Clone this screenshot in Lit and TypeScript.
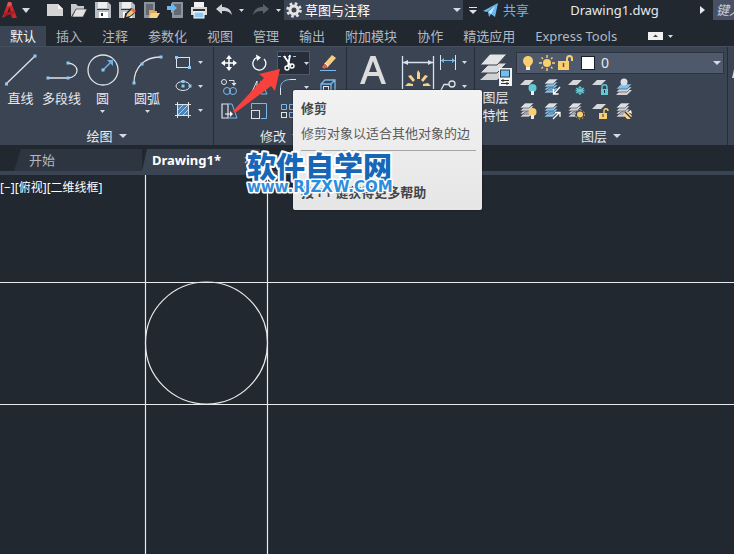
import { LitElement, html, svg, css, nothing } from "lit";
import { customElement, state } from "lit/decorators.js";
import { classMap } from "lit/directives/class-map.js";

const icon = (w: number, h: number, body: unknown) =>
  html`<svg class="icon" width=${w} height=${h} viewBox="0 0 ${w} ${h}" fill="none" aria-hidden="true">${body}</svg>`;

const dot = (x: number, y: number) =>
  svg`<rect x=${x - 1.5} y=${y - 1.5} width="3" height="3" fill="#8cc8f0"/>`;

const W = "#dfe3e8";
const B = "#7ab8ea";
const Y = "#f9cf72";
const T = "#62c8d2";

const caret = (w = 6, h = 3) =>
  html`<svg class="icon" width=${w} height=${h} viewBox="0 0 6 3" preserveAspectRatio="none" aria-hidden="true"><path d="M0 0H6L3 3Z" fill="#d5dbe3"/></svg>`;

/* quick access bar */
const qNew = icon(18, 18, svg`<path d="M1 3H12L17 8V15H1Z" fill="#d4d4d4"/><path d="M12 3V8H17Z" fill="#f2f2f2"/>`);
const qOpen = icon(18, 18, svg`<path d="M1 16V3H6L8 5H14V8H6Z" fill="#c9c9c9"/><path d="M6 8H17L13 16H2Z" fill="#e2e2e2" stroke="#212830" stroke-width=".6"/>`);
const disk = svg`<path d="M1 1H14L17 4V17H1Z" fill="#b9bcc0"/><rect x="4" y="1" width="9" height="6" fill="#eee"/><path d="M3 8.500H15" stroke="#30363e"/><rect x="5" y="11" width="9" height="6" fill="#fff"/><rect x="7" y="12" width="2" height="3" fill="#333"/>`;
const pencil = svg`<path d="M6 18L7 13L13 7L18 11L11 17Z" fill="#212830"/><path d="M8 16L9 13L14 8L17 11L12 15Z" fill="#f3c471"/><path d="M13 9L15 7L18 10L16 12Z" fill="#e06a50"/>`;
const qSave = icon(18, 18, disk);
const qSaveAs = icon(18, 18, svg`${disk}${pencil}`);
const qDevOpen = icon(18, 18, svg`<rect x="2" y="1" width="11" height="16" fill="#8e949c"/><rect x="4" y="3" width="7" height="11" fill="#626973"/><path d="M7 16V9H11L12 10H15V16Z" fill="#dca95a"/><path d="M9 12H18L15 17H7Z" fill="#f9d287"/>`);
const qDevSave = icon(18, 18, svg`<rect x="6" y="1" width="11" height="16" fill="#8e949c"/><rect x="8" y="3" width="7" height="11" fill="#626973"/><path d="M1 5H5V2L11 7L5 12V9H1Z" fill="#6db8f0"/>`);
const qPrint = icon(18, 18, svg`<rect x="4" y="1" width="10" height="5" fill="#f2f2f2"/><rect x="1" y="6" width="16" height="8" fill="#d9d9d9"/><path d="M3 9H15" stroke="#333" stroke-width="2"/><rect x="4" y="11" width="10" height="6" fill="#8ac9f5" stroke="#fff"/>`);
const arrowPath = "M1 8L7 3V6C12 6 16 8 17 14C14 10 11 10 7 10V13Z";
const qUndo = icon(18, 18, svg`<path d=${arrowPath} fill="#cfd3d8"/>`);
const qRedo = icon(18, 18, svg`<path d=${arrowPath} transform="translate(18 0) scale(-1 1)" fill="#5b626d"/>`);
const gear = icon(16, 16, svg`<circle cx="8" cy="8" r="4" stroke="#e4e4e4" stroke-width="3"/><circle cx="8" cy="8" r="6.500" stroke="#e4e4e4" stroke-width="2.600" stroke-dasharray="2.600 2.500"/>`);
const plane = icon(16, 16, svg`<path d="M0 9L15 1L12 15L8 12L6 15L5 10L12 4L4 10Z" fill="#69b7ee"/><path d="M5 10L12 4L8 12Z" fill="#cbe6fa"/>`);
const logo = icon(18, 18, svg`<path d="M2 17L8 1H11L17 17H12L9.500 6L6 15Z" fill="#c8282e"/><path d="M4 12L14 10V13L4 15Z" fill="#a01e25"/><path d="M8 1H11L12 4L7 6Z" fill="#e2555a"/>`);

/* draw panel */
const iLine = icon(32, 32, svg`<path d="M1 30L30 2" stroke=${W} stroke-width="1.300"/>${dot(1.5, 30)}${dot(30, 2)}`);
const iPoly = icon(32, 32, svg`<path d="M2 24H22C34 23 34 10 22 9" stroke=${W} stroke-width="1.300"/>${dot(2, 24)}${dot(22, 24)}${dot(22, 9)}`);
const iCircle = icon(32, 32, svg`<circle cx="16" cy="16" r="15" stroke=${W} stroke-width="1.300"/><path d="M16 16L23 9" stroke="#6db4ee" stroke-width="1.500"/><path d="M26 6V12L20 6Z" fill="#6db4ee"/>${dot(16, 16)}`);
const iArc = icon(32, 32, svg`<path d="M3 29C3 13 14 3 29 3" stroke=${W} stroke-width="1.300"/>${dot(3, 29)}${dot(11, 10)}${dot(30, 3)}`);
const iRect = icon(20, 20, svg`<rect x="2.500" y="5.500" width="13" height="10" stroke=${W}/>${dot(2.5, 5.5)}${dot(15.5, 15.5)}`);
const iEllipse = icon(20, 20, svg`<ellipse cx="9" cy="10" rx="7" ry="4.500" stroke=${W}/>${dot(9, 5.5)}${dot(9, 10)}${dot(16, 10)}`);
const iHatch = icon(20, 20, svg`<rect x="4" y="5" width="10" height="10" fill="#4d83b4"/><path d="M4 10L9 5M4 15L14 5M9 15L14 10" stroke="#a8d4f7"/><path d="M3.500 2V18M14.500 2V18M1 4.500H17M1 15.500H17" stroke=${W}/>`);

/* modify panel */
const iMove = icon(20, 20, svg`<path d="M10 4V16M4 10H16" stroke="#fff" stroke-width="1.500"/><path d="M10 2L13 6H7ZM10 18L13 14H7ZM2 10L6 7V13ZM18 10L14 7V13Z" fill="#fff"/>`);
const iRotate = icon(20, 20, svg`<path d="M15 6A6.500 6.500 0 1 1 8 4.500" stroke="#fff" stroke-width="1.300"/><path d="M7 1.500L12 4.500L8 8Z" fill="#fff"/>`);
const iTrim = icon(20, 20, svg`<path d="M0 3.500H20" stroke="#9cc9ee" stroke-dasharray="3 2"/><path d="M6 3L13 13M12 2L10 13" stroke="#fff" stroke-width="1.800"/><circle cx="9" cy="15" r="2" stroke="#fff" stroke-width="1.400"/><circle cx="14" cy="13" r="2" stroke="#fff" stroke-width="1.400"/>`);
const iErase = icon(20, 20, svg`<path d="M2 17.500H18" stroke=${B} /><path d="M6 11L14 2L18 5L9 15Z" fill="#f7cf7c"/><path d="M7 10L10 13L6 16L4 14Z" fill="#e2604c"/><path d="M7 10L10 13" stroke="#fff"/>`);
const iCopy = icon(20, 20, svg`<circle cx="5" cy="5" r="2.500" stroke=${W}/><path d="M10 3.500H15V7" stroke=${W}/><path d="M12.500 6H17.500L15 9Z" fill=${W}/><circle cx="8" cy="14" r="3.500" stroke=${B}/><circle cx="14" cy="14" r="3.500" stroke=${B}/>`);
const iMirror = icon(20, 20, svg`<path d="M2 17L8 4V17Z" stroke=${W}/><path d="M12 4V17H18Z" stroke=${B}/>`);
const iFillet = icon(20, 20, svg`<path d="M2.500 18V10" stroke=${W}/><path d="M2.500 11C2.500 5 7 2.500 13 2.500" stroke=${B}/><path d="M12 2.500H18" stroke=${W}/>`);
const iCube = icon(20, 20, svg`<path d="M3 7H13V17H3ZM3 7L7 3H17V13L13 17M13 7L17 3" stroke=${B} stroke-width="1.300"/><rect x="5.500" y="9.500" width="5" height="6" stroke=${W}/>`);
const iStretch = icon(20, 20, svg`<path d="M9 3H3V17H9Z" stroke=${W} stroke-width="1.200"/><path d="M9 3H13L18 17H9" stroke=${B}/><path d="M6 13H12" stroke="#fff"/><path d="M11 10V16L14 13Z" fill="#fff"/>`);
const iScale = icon(20, 20, svg`<path d="M2.500 8V2.500H17.500V17.500H12" stroke=${B}/><rect x="2.500" y="9.500" width="8" height="8" stroke=${W}/>`);
const iArray = icon(20, 20, svg`<path d="M3.500 3.500H8.500V8.500H3.500ZM11.500 3.500H16.500V8.500H11.500ZM11.500 11.500H16.500V16.500H11.500Z" stroke=${B}/><rect x="3.500" y="11.500" width="5" height="5" stroke=${W}/>`);
const iOffset = icon(20, 20, svg`<path d="M3 3V17H17" stroke=${B}/>`);

/* annotation panel */
const iText = icon(32, 32, svg`<path d="M3 30L13.500 2H18.500L29 30H24.500L21.500 22H10.500L7.500 30ZM12 18H20L16 7Z" fill="#dcdcdc" fill-rule="evenodd"/>`);
const iDim = icon(36, 36, svg`<path d="M2.500 2V35M33.500 2V35M3 8.500H33" stroke="#d5e3f0" stroke-width="1.300"/><path d="M3 8.500L8 6V11ZM33 8.500L28 6V11Z" fill="#d5e3f0"/><path d="M17 19L18 16L20 19V25H17ZM8 22L11 21L15 26L13 28ZM28 22L25 21L21 26L23 28ZM5 32L8 29L13 30V32ZM31 32L28 29L23 30V32Z" fill="#f9d084"/>`);
const iLinear = icon(20, 20, svg`<path d="M2.500 3V18M17.500 3V18" stroke="#d5e3f0"/><path d="M3 8.500H17" stroke=${B}/><path d="M3 8.500L6 6V11ZM17 8.500L14 6V11Z" fill=${B}/>`);
const iLeader = icon(20, 20, svg`<path d="M2 16L6 8.500H11" stroke=${W} stroke-width="1.300"/><circle cx="14" cy="8" r="3" stroke=${W} stroke-width="1.300"/>`);

/* layers panel */
const sheet = (y: number, fill = "#d6d8db") => svg`<path d="M6 ${y}H15L10 ${y + 5}H1Z" fill=${fill}/>`;
const sheets = (low: string) => svg`<path d="M6 7H15L10 12H1ZM6 10H15L10 15H1Z" fill=${low} stroke="#3b4453" stroke-width=".6"/><path d="M6 4H15L10 9H1Z" fill=${low} stroke="#3b4453" stroke-width=".6"/><path d="M6 1H15L10 6H1Z" fill="#dcdee0" stroke="#3b4453" stroke-width=".6"/>`;
const bulb = (c: string) => svg`<circle cx="13.500" cy="10" r="4" fill=${c}/><path d="M12 13H15V17H12Z" fill="#e9eef2"/>`;
const iProps = icon(32, 32, svg`<path d="M10 17H27L17 26H0Z" fill="#cfd1d3"/><path d="M10 9H27L17 19H0Z" fill="#dadbdc" stroke="#3b4453"/><path d="M10 0H27L17 11H0Z" fill="#e3e4e5" stroke="#3b4453"/><rect x="19" y="14" width="13" height="18" fill="#f2f2f2"/><rect x="20.500" y="16" width="9" height="7" fill="#74bdf2" stroke="#26405a"/><path d="M21 26.500H29M21 29.500H29M23 25V28M27 28V31" stroke="#333"/>`);
const lOff = icon(18, 18, svg`${sheet(2)}${bulb(T)}`);
const lIso = icon(18, 18, svg`${sheets("#86c1ec")}<path d="M17 9L11 15.500M10.500 11V16H15.500" stroke="#fff" stroke-width="1.300"/>`);
const lFreeze = icon(18, 18, svg`${sheet(2)}<path d="M13 8V17M9 10L17 15M17 10L9 15M8.500 12.500H17.500" stroke=${T} stroke-width="1.200"/><circle cx="13" cy="12.500" r="3" stroke=${T}/>`);
const lLock = icon(18, 18, svg`${sheet(2)}<path d="M11 11V9C11 6 16 6 16 9V11" stroke=${T} stroke-width="1.400"/><rect x="10" y="11" width="7" height="6" fill=${T}/><path d="M13.500 12V15" stroke="#234"/>`);
const lMake = icon(18, 18, svg`<path d="M6 12H17L12 17H1Z" fill="#cfd1d3"/><path d="M6 9H17L12 14H1Z" fill="#cfd1d3" stroke="#3b4453" stroke-width=".6"/><path d="M6 6H17L12 11H1Z" fill="#7fbff0" stroke="#3b4453" stroke-width=".6"/><circle cx="9" cy="4" r="3.500" fill="#dcdfe5"/>`);
const lOn = icon(18, 18, svg`${sheets("#cfd1d3")}${bulb(Y)}`);
const lUniso = icon(18, 18, svg`${sheets("#86c1ec")}<path d="M10 17L16.500 10.500M12 10.500H17V15" stroke="#fff" stroke-width="1.300"/>`);
const lThaw = icon(18, 18, svg`${sheets("#cfd1d3")}<circle cx="13" cy="12.500" r="5" fill="#3b4453"/><circle cx="13" cy="12.500" r="3" fill=${Y}/><circle cx="13" cy="12.500" r="4.500" stroke=${Y} stroke-dasharray="1.300 2.200"/>`);
const lUnlock = icon(18, 18, svg`${sheet(2)}<path d="M13 11V9C13 6 17 6 17 9" stroke=${Y} stroke-width="1.400"/><rect x="8" y="11" width="8" height="6" fill=${Y}/><path d="M12 12V15" stroke="#432"/>`);
const lMatch = icon(18, 18, svg`${sheets("#cfd1d3")}<path d="M8 12L12 9L17 14L15 17H12Z" fill="#f7d68c"/><path d="M10 10L16 16" stroke="#333" stroke-width="1.300"/><path d="M13 10L16 8L17 12Z" fill="#fff"/>`);
const sBulb = icon(16, 16, svg`<circle cx="8" cy="6" r="5" fill=${Y}/><path d="M5 9H11L10 12H6Z" fill=${Y}/><rect x="6" y="12" width="4" height="3" fill="#eee"/>`);
const sSun = icon(16, 16, svg`<circle cx="8" cy="8" r="4" fill=${Y}/><path d="M8 0V3M8 13V16M0 8H3M13 8H16M2.500 2.500L4 4M12 12L13.500 13.500M13.500 2.500L12 4M4 12L2.500 13.500" stroke=${Y} stroke-width="1.400"/>`);
const sLock = icon(16, 16, svg`<path d="M9 7V4C9 0 14 0 14 4V6" stroke=${Y} stroke-width="2"/><rect x="0" y="6" width="11" height="9" fill=${Y}/><path d="M5.500 8V12" stroke="#7a4a18" stroke-width="1.500"/>`);

type Tool = { name: string; glyph: unknown; menu?: boolean; hot?: boolean };

@customElement("app-root")
export class AppRoot extends LitElement {
  @state() private tab = "默认";

  static styles = css`
    :host {
      display: flex;
      flex-direction: column;
      min-height: 100vh;
      position: relative;
      overflow: hidden;
      background: #212830;
      color: #e6e9ed;
      font: 13px/16px "Noto Sans", "Noto Sans CJK SC", sans-serif;
    }
    * { box-sizing: border-box; }
    .icon { display: block; flex: none; }
    button, select, input {
      font: inherit;
      color: inherit;
      background: none;
      border: 0;
      padding: 0;
      margin: 0;
    }
    a { color: inherit; text-decoration: none; }
    .title {
      display: flex;
      align-items: center;
      height: 20px;
      flex: none;
      white-space: nowrap;
      overflow: hidden;
    }
    .app { display: flex; align-items: center; gap: 4px; width: 46px; }
    .quick { display: flex; gap: 6px; }
    .history { display: flex; align-items: center; gap: 8px; padding-left: 7px; }
    .history .tool { gap: 6px; }
    .space {
      display: flex;
      align-items: center;
      gap: 3px;
      height: 20px;
      width: 179px;
      margin-left: 3px;
      padding: 0 2px;
      background: #3b4453;
      color: #fff;
    }
    .space select, .layer select { appearance: none; flex: 1; min-width: 0; }
    .more { width: 20px; display: grid; justify-items: center; }
    .share { display: flex; align-items: center; gap: 4px; color: #69b7ee; }
    .file { flex: 1; text-align: center; }
    .find { display: flex; align-items: center; gap: 8px; }
    .find input {
      width: 21px;
      height: 20px;
      padding-left: 3px;
      background: #4a5064;
      font-style: italic;
    }
    .find input::placeholder { color: #c9ced6; opacity: 1; }
    .tabs {
      display: flex;
      align-items: center;
      height: 26px;
      flex: none;
      padding-top: 6px;
      white-space: nowrap;
      overflow: hidden;
      color: #b3b9c2;
    }
    .tab { height: 20px; padding: 0 10px; }
    .tab.on { background: #3b4453; color: #f2f4f6; }
    .fold { display: flex; align-items: center; gap: 5px; margin-left: 21px; }
    .ribbon {
      display: flex;
      height: 99px;
      flex: none;
      background: #3b4453;
      border-top: 1px solid #454e5d;
    }
    .panel {
      display: flex;
      flex-direction: column;
      justify-content: space-between;
      flex: none;
      padding-top: 4px;
      border-right: 1px solid #262d37;
    }
    .draw { width: 214px; }
    .modify { width: 133px; }
    .note { width: 128px; padding-left: 2px; }
    .layers { width: 253px; }
    .rest { flex: 1; overflow: hidden; padding-left: 4px; }
    .body { display: flex; }
    .caption {
      display: flex;
      align-items: center;
      justify-content: center;
      gap: 6px;
      height: 18px;
    }
    .big {
      display: flex;
      flex-direction: column;
      align-items: center;
      gap: 4px;
      width: 41px;
      padding-top: 3px;
      white-space: nowrap;
    }
    .wide { width: 48px; }
    .stack { display: grid; grid-auto-rows: 24px; padding-left: 3px; }
    .note .stack { padding-left: 0; }
    .grid {
      display: grid;
      grid-template-columns: 30px 30px 38px 32px;
      grid-auto-rows: 24px;
      justify-items: center;
      align-items: center;
    }
    .tool { display: flex; align-items: center; gap: 4px; height: 22px; }
    .grid .tool { gap: 6px; }
    .hot { background: #272e39; outline: 1px solid #4d5768; }
    .tall { line-height: 18px; gap: 2px; }
    .side { flex: 1; min-width: 0; padding: 1px 3px 0 0; }
    .layer {
      display: flex;
      align-items: center;
      gap: 3px;
      height: 22px;
      padding: 0 2px 0 3px;
      background: #4e596b;
      border: 1px solid #2c3440;
      font-size: 14px;
    }
    .layer select { padding-left: 3px; }
    .swatch { width: 14px; height: 14px; margin-left: 4px; background: #fff; border: 1px solid #1b2027; }
    .states {
      display: grid;
      grid-template-columns: repeat(5, 24px);
      grid-auto-rows: 24px;
      align-items: center;
      padding-left: 3px;
      padding-top: 1px;
    }
    .docs {
      display: flex;
      align-items: center;
      height: 30px;
      flex: none;
      padding: 4px 0 0 14px;
      border-bottom: 4px solid #3b4453;
    }
    .doc { height: 22px; padding: 0 15px; text-align: left; }
    .home {
      width: 128px;
      background: #2d3541;
      color: #b3b9c2;
      clip-path: polygon(7px 0, 100% 0, 100% 100%, 0 100%);
    }
    .open {
      display: flex;
      align-items: center;
      justify-content: space-between;
      width: 118px;
      padding: 0 8px 0 10px;
      background: #3b4453;
      color: #fff;
      font-weight: bold;
      clip-path: polygon(5px 0, 100% 0, 100% 100%, 0 100%);
    }
    .canvas { position: relative; flex: 1; min-height: 200px; }
    .drawing { position: absolute; inset: 0; width: 100%; height: 100%; }
    .view { position: relative; font-size: 12px; padding-top: 5px; color: #fff; }
    .tip {
      position: absolute;
      left: 293px;
      top: 90px;
      width: 189px;
      height: 120px;
      padding: 10px 6px 0 8px;
      border-radius: 2px;
      background: linear-gradient(#f2f2f2, #e6e6e6);
      box-shadow: 0 0 2px #0008;
      color: #5a5a5a;
      white-space: nowrap;
    }
    .tip p, .tip h2 { margin: 0; font-size: 13px; }
    .tip h2 { color: #444; font-weight: 600; }
    .tip .about { padding: 9px 0; border-bottom: 1px solid #a5a5a5; }
    .tip .help { padding-top: 33px; color: #444; font-weight: 600; }
    .mark { position: absolute; left: 246px; top: 146px; width: 150px; height: 50px; }
    .mark text {
      fill: #1667b7;
      stroke: #fff;
      stroke-width: 4px;
      stroke-linejoin: round;
      paint-order: stroke;
      font-weight: 900;
    }
    .mark .zh { font-size: 29px; }
    .mark .url { font: bold 15px "DejaVu Sans", sans-serif; fill: #2c8fdc; stroke-width: 3px; }
    .pointer { position: absolute; left: 230px; top: 66px; }
  `;

  private tool(t: Tool) {
    return html`<button class=${classMap({ tool: true, hot: !!t.hot })} aria-label=${t.name}>
      ${t.glyph}${t.menu ? caret(5, 3) : nothing}
    </button>`;
  }

  render() {
    const tabs = ["默认", "插入", "注释", "参数化", "视图", "管理", "输出", "附加模块", "协作", "精选应用", "Express Tools"];
    const quick: Tool[] = [
      { name: "新建", glyph: qNew }, { name: "打开", glyph: qOpen }, { name: "保存", glyph: qSave },
      { name: "另存为", glyph: qSaveAs }, { name: "从移动设备打开", glyph: qDevOpen },
      { name: "保存到移动设备", glyph: qDevSave }, { name: "打印", glyph: qPrint },
    ];
    const shapes: Tool[] = [
      { name: "矩形", glyph: iRect, menu: true }, { name: "椭圆", glyph: iEllipse, menu: true }, { name: "图案填充", glyph: iHatch, menu: true },
    ];
    const edits: Tool[] = [
      { name: "移动", glyph: iMove }, { name: "旋转", glyph: iRotate }, { name: "修剪", glyph: iTrim, menu: true, hot: true }, { name: "删除", glyph: iErase },
      { name: "复制", glyph: iCopy }, { name: "镜像", glyph: iMirror }, { name: "圆角", glyph: iFillet, menu: true }, { name: "分解", glyph: iCube },
      { name: "拉伸", glyph: iStretch }, { name: "缩放", glyph: iScale }, { name: "阵列", glyph: iArray, menu: true }, { name: "偏移", glyph: iOffset },
    ];
    const layerTools: Tool[] = [
      { name: "关", glyph: lOff }, { name: "隔离", glyph: lIso }, { name: "冻结", glyph: lFreeze }, { name: "锁定", glyph: lLock }, { name: "置为当前", glyph: lMake },
      { name: "打开所有图层", glyph: lOn }, { name: "取消隔离", glyph: lUniso }, { name: "解冻", glyph: lThaw }, { name: "解锁", glyph: lUnlock }, { name: "匹配图层", glyph: lMatch },
    ];
    return html`
      <header class="title">
        <button class="app" aria-label="应用程序菜单">${logo}${caret(8, 5)}</button>
        <div class="quick">${quick.map((t) => this.tool(t))}</div>
        <div class="history">
          ${this.tool({ name: "放弃", glyph: qUndo, menu: true })}
          ${this.tool({ name: "重做", glyph: qRedo, menu: true })}
        </div>
        <div class="space">
          ${gear}
          <select aria-label="工作空间"><option>草图与注释</option></select>
          ${caret(8, 4)}
        </div>
        <button class="more" aria-label="自定义快速访问工具栏">
          ${icon(8, 7, svg`<path d="M0 .5H8" stroke=${W}/><path d="M0 3H8L4 7Z" fill=${W}/>`)}
        </button>
        <a class="share" href="#share">${plane}共享</a>
        <div class="file">Drawing1.dwg</div>
        <div class="find">
          ${icon(5, 8, svg`<path d="M0 0L5 4L0 8Z" fill="#e6e9ed"/>`)}
          <input type="text" aria-label="搜索" placeholder="键入关键字或短语" />
        </div>
      </header>
      <nav class="tabs">
        ${tabs.map((t) => html`<button class=${classMap({ tab: true, on: t === this.tab })} @click=${() => (this.tab = t)}>${t}</button>`)}
        <button class="fold" aria-label="最小化功能区">
          ${icon(15, 8, svg`<rect width="15" height="8" fill="#f0f0f0"/><path d="M5 5H10L7.500 2.500Z" fill="#444"/>`)}${caret(5, 3)}
        </button>
      </nav>
      <section class="ribbon">
        <div class="panel draw">
          <div class="body">
            <button class="big">${iLine}<span>直线</span></button>
            <button class="big">${iPoly}<span>多段线</span></button>
            <button class="big">${iCircle}<span>圆</span>${caret(5, 3)}</button>
            <button class="big wide">${iArc}<span>圆弧</span>${caret(5, 3)}</button>
            <div class="stack">${shapes.map((t) => this.tool(t))}</div>
          </div>
          <div class="caption">绘图 ${caret(8, 4)}</div>
        </div>
        <div class="panel modify">
          <div class="grid">${edits.map((t) => this.tool(t))}</div>
          <div class="caption">修改 ${caret(8, 4)}</div>
        </div>
        <div class="panel note">
          <div class="body">
            <button class="big wide" aria-label="文字">${iText}</button>
            <button class="big" aria-label="标注">${iDim}</button>
            <div class="stack">
              ${this.tool({ name: "线性", glyph: iLinear, menu: true })}
              ${this.tool({ name: "引线", glyph: iLeader, menu: true })}
            </div>
          </div>
        </div>
        <div class="panel layers">
          <div class="body">
            <button class="big tall">${iProps}<span>图层<br />特性</span></button>
            <div class="side">
              <div class="layer">
                ${sBulb}${sSun}${sLock}<span class="swatch"></span>
                <select aria-label="图层"><option>0</option></select>
                ${caret(8, 4)}
              </div>
              <div class="states">${layerTools.map((t) => this.tool(t))}</div>
            </div>
          </div>
          <div class="caption">图层 ${caret(8, 4)}</div>
        </div>
        <div class="rest">${icon(24, 40, svg`<path d="M0 31L4 14H10V31Z" fill="#d6d8db"/>`)}</div>
      </section>
      <nav class="docs">
        <button class="doc home">开始</button>
        <button class="doc open">Drawing1*
          ${icon(8, 8, svg`<path d="M1 1L7 7M7 1L1 7" stroke="#b3b9c2" stroke-width="1.500"/>`)}
        </button>
      </nav>
      <main class="canvas">
        <svg class="drawing" fill="none" stroke="#e8eaec" stroke-width="1.200">
          <line x1="145.500" y1="0" x2="145.500" y2="100%" />
          <line x1="267.500" y1="0" x2="267.500" y2="100%" />
          <line x1="0" y1="107.500" x2="100%" y2="107.500" />
          <line x1="0" y1="229.500" x2="100%" y2="229.500" />
          <circle cx="206.500" cy="168" r="61" />
        </svg>
        <div class="view">[−][俯视][二维线框]</div>
      </main>
      <aside class="tip" role="tooltip">
        <h2>修剪</h2>
        <p class="about">修剪对象以适合其他对象的边</p>
        <p class="help">按 F1 键获得更多帮助</p>
      </aside>
      <svg class="pointer" width="56" height="50" viewBox="0 0 56 50" aria-hidden="true">
        <path d="M50 3L45 25L41 20L5 47L3 45L34 12L29 8Z" fill="#f8403c" />
      </svg>
      <svg class="mark" aria-hidden="true">
        <text class="zh" x="1" y="32">软件自学网</text>
        <text class="url" x="1" y="46">www.RJZXW.COM</text>
      </svg>
    `;
  }
}
